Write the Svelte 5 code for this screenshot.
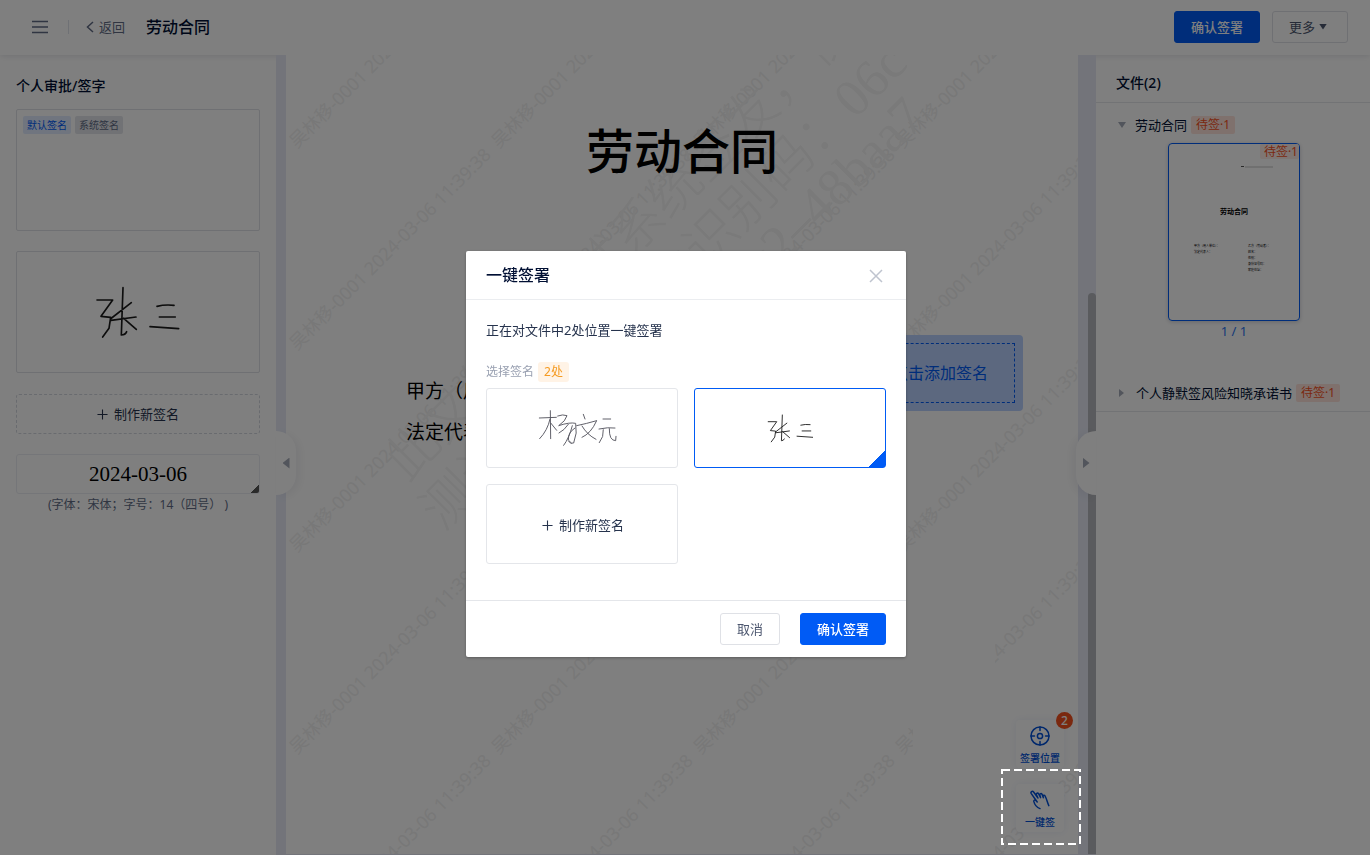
<script lang="ts">
  const WATERMARK = "吴林移-0001 2024-03-06 11:39:38";
  const TILE = 202;
  const tiles = [0, 1, 2, 3, 4].flatMap((row) =>
    [0, 1, 2, 3].map((col) => ({ x: col * TILE + 11, y: row * TILE + 94 }))
  );

  const left = ["甲方（用人单位）：", "法定代表人："];
  const right = ["乙方（劳动者）：", "姓名：", "性别：", "身份证号码：", "家庭住址："];

  let selected = $state(1);
  let open = $state(true);
</script>

{#snippet zhangSan()}
  <path d="M291 177H338L303 226L332 229L327 262L308 288M369 140L364 282Q376 282 380 272M394 185L331 234M333 238L408 228M371 232L409 265M471 196Q495 190 522 193M478 228H526M450 257L536 263" />
{/snippet}

{#snippet plus()}
  <svg class="plus" viewBox="0 0 12 12"><path d="M6 0.5V11.5M0.5 6H11.5" /></svg>
{/snippet}

<div class="app">
  <header>
    <button class="bare" aria-label="菜单">
      <svg width="16" height="14" viewBox="0 0 16 14" stroke="#606b85" stroke-width="1.3"><path d="M0 1.5H16M0 7H16M0 12.5H16" /></svg>
    </button>
    <span class="split"></span>
    <a class="back" href="#back">
      <svg width="8" height="12" viewBox="0 0 8 12" fill="none" stroke="#606b85" stroke-width="1.5"><path d="M7 1L1.5 6L7 11" /></svg>
      返回
    </a>
    <h1>劳动合同</h1>
    <button class="btn primary">确认签署</button>
    <button class="btn more">更多 <span class="tri down"></span></button>
  </header>

  <main>
    <aside class="signs">
      <h2>个人审批/签字</h2>
      <div class="sign-box">
        <span class="tag blue">默认签名</span>
        <span class="tag gray">系统签名</span>
      </div>
      <div class="sign-box centered">
        <svg class="ink" width="90" height="57" viewBox="279 129 270 171" stroke-width="5">{@render zhangSan()}</svg>
      </div>
      <button class="make">{@render plus()}制作新签名</button>
      <div class="date">2024-03-06</div>
      <p class="hint">(字体：宋体；字号：14（四号） )</p>
    </aside>

    <section class="viewer">
      <div class="page">
        <svg class="marks" aria-hidden="true">
          <g class="small">
            {#each tiles as t}
              <text transform="translate({t.x} {t.y}) rotate(-45)">{WATERMARK}</text>
            {/each}
          </g>
          <rect x="627" y="560" width="82" height="300" fill="#fff" />
          <g class="large">
            <text transform="translate(121 428) rotate(-45)">此文件由测试系统签发，仅</text>
            <text transform="translate(157 477) rotate(-45)">测试使用，文件识别码：06c</text>
            <text transform="translate(423 283) rotate(-45)">983c2–48baa7</text>
          </g>
        </svg>
        <h3>劳动合同</h3>
        <div class="parties">
          <div>{#each left as line}<p>{line}</p>{/each}</div>
          <div>{#each right as line}<p>{line}</p>{/each}</div>
        </div>
        <button class="sign-here"><span>点击添加签名</span></button>
      </div>
      <div class="thumb-bar"></div>

      <button class="handle to-left" aria-label="收起签名"><span class="tri left"></span></button>
      <button class="handle to-right" aria-label="收起文件"><span class="tri right"></span></button>

      <div class="tools">
        <button class="tool">
          <svg width="20" height="20" viewBox="0 0 20 20"><circle cx="10" cy="10" r="9" /><circle cx="10" cy="10" r="2.6" /><path d="M10 1V4.500M10 15.500V19M1 10H4.500M15.500 10H19" /></svg>
          签署位置
          <span class="badge">2</span>
        </button>
        <button class="tool">
          <svg width="22" height="20" viewBox="0 0 22 20"><path d="M11 18.6C7.5 17.4 5.6 14.6 4.8 11.4C4.6 10.2 6 9.6 7 10.6L8.2 12L2.3 3.6C1.2 1.8 3.4 .4 4.6 2L9 8L7.4 4.9C6.8 3.2 8.8 2.4 9.7 4L11.6 7.6L10.8 5C10.6 3.5 12.4 3 13.2 4.6L14.4 7.6L14 6C14.2 4.8 15.6 5 16.1 6C18 9.8 18.2 12.2 19.8 15.6" /></svg>
          一键签
        </button>
      </div>
      <svg class="focus"><rect x="1" y="1" width="78" height="74" /></svg>
    </section>

    <aside class="files">
      <h2>文件(2)</h2>
      <div class="file">
        <div class="file-name"><span class="tri down"></span>劳动合同<span class="tag red">待签·1</span></div>
        <button class="preview">
          <span class="corner">待签·1</span>
          <svg viewBox="0 0 130 176">
            <path d="M72 22.500H75" stroke="#555" />
            <path d="M76 23H104" stroke="#999" stroke-width=".6" />
            <text x="65" y="70" font-size="7" font-weight="700" text-anchor="middle">劳动合同</text>
            <g font-size="3">
              {#each left as line, i}<text x="25" y={103 + i * 6}>{line}</text>{/each}
              {#each right as line, i}<text x="79" y={103 + i * 6}>{line}</text>{/each}
            </g>
          </svg>
        </button>
        <div class="page-no">1 / 1</div>
      </div>
      <div class="file">
        <div class="file-name"><span class="tri right small-tri"></span>个人静默签风险知晓承诺书<span class="tag red">待签·1</span></div>
      </div>
    </aside>
  </main>
</div>

{#if open}
  <div class="overlay">
    <div class="dialog" role="dialog" aria-labelledby="dialog-title">
      <div class="dialog-head">
        <h2 id="dialog-title">一键签署</h2>
        <button class="bare close" aria-label="关闭" onclick={() => (open = false)}>
          <svg width="14" height="14" viewBox="0 0 14 14" stroke="#bfc4cf" stroke-width="1.5"><path d="M1 1L13 13M13 1L1 13" /></svg>
        </button>
      </div>
      <div class="dialog-body">
        <p>正在对文件中2处位置一键签署</p>
        <div class="pick">选择签名<span class="count">2处</span></div>
        <div class="cards">
          <button class="card" class:selected={selected === 0} aria-label="杨文元" onclick={() => (selected = 0)}>
            <svg class="ink pale" width="80" height="38" viewBox="227 478 240 114" stroke-width="2.800">
              <path d="M219 505L270 503M252 483L253 567M251 508Q244 542 220 567M254 521L271 542" />
              <path d="M274 499Q290 493 302 498Q298 514 277 528Q310 517 328 521Q334 550 322 580Q312 585 306 574M306 524Q294 542 278 550M318 528Q308 566 292 587M326 535Q305 548 306 571L315 580" />
              <path d="M351 494L356 508M331 528Q360 522 391 513M390 515Q374 551 347 563M347 529Q362 555 389 569" />
              <path d="M410 508H433M398 538Q425 532 446 535M411 540Q413 562 399 579M429 537Q428 573 448 573L449 560" />
            </svg>
          </button>
          <button class="card" class:selected={selected === 1} aria-label="张三" onclick={() => (selected = 1)}>
            <svg class="ink" width="49" height="31" viewBox="279 129 270 171" stroke-width="5">{@render zhangSan()}</svg>
          </button>
          <button class="card make-card">{@render plus()}制作新签名</button>
        </div>
      </div>
      <div class="dialog-foot">
        <button class="btn" onclick={() => (open = false)}>取消</button>
        <button class="btn primary">确认签署</button>
      </div>
    </div>
  </div>
{/if}

<style>
  :global(body) {
    overflow: hidden;
  }
  .app,
  .overlay {
    font-family: "Noto Sans", "Noto Sans CJK SC", sans-serif;
    font-size: 13px;
    line-height: 20px;
    color: #26334d;
  }
  .app {
    display: flex;
    flex-direction: column;
    height: 100vh;
    background: #fff;
  }
  button {
    font: inherit;
    color: inherit;
    background: none;
    border: none;
    padding: 0;
    cursor: pointer;
  }
  h1,
  h2,
  h3,
  p {
    margin: 0;
  }
  h1 {
    flex: 1;
    font-size: 16px;
    font-weight: 500;
    color: #000f33;
  }
  h2 {
    font-size: 14px;
    font-weight: 500;
    color: #000f33;
  }
  svg {
    display: block;
    flex: none;
  }

  header {
    display: flex;
    align-items: center;
    height: 55px;
    padding: 0 22px 2px 32px;
    box-sizing: border-box;
    box-shadow: 0 1px 6px rgba(0, 15, 51, 0.12);
    position: relative;
  }
  .split {
    width: 1px;
    height: 14px;
    margin: 0 17px 0 20px;
    background: #dfe2ea;
  }
  .back {
    display: flex;
    align-items: center;
    gap: 5px;
    margin-right: 21px;
    color: #606b85;
    text-decoration: none;
  }
  .btn {
    display: flex;
    align-items: center;
    gap: 4px;
    height: 32px;
    padding: 0 16px;
    box-sizing: border-box;
    border: 1px solid #dfe1e6;
    border-radius: 3px;
    color: #4d576f;
  }
  .btn.more {
    padding-right: 20px;
  }
  .btn.primary {
    border-color: #005bf5;
    background: #005bf5;
    color: #fff;
    font-weight: 500;
  }
  header .primary {
    margin-right: 12px;
  }
  .tri {
    display: block;
    flex: none;
    width: 8px;
    height: 6px;
    background: #4d576f;
    clip-path: polygon(0 0, 100% 0, 50% 100%);
  }
  .tri.left,
  .tri.right {
    width: 7px;
    height: 11px;
    background: #a5abb8;
  }
  .tri.left {
    clip-path: polygon(100% 0, 100% 100%, 0 50%);
  }
  .tri.right {
    clip-path: polygon(0 0, 100% 50%, 0 100%);
  }

  main {
    display: flex;
    flex: 1;
    min-height: 0;
  }
  .signs {
    display: flex;
    flex-direction: column;
    width: 276px;
    padding: 21px 16px;
    box-sizing: border-box;
  }
  .sign-box {
    display: flex;
    align-items: flex-start;
    gap: 4px;
    height: 122px;
    margin-bottom: 20px;
    padding: 6px;
    box-sizing: border-box;
    border: 1px solid #dfe1e6;
    border-radius: 2px;
  }
  h2 + .sign-box {
    margin-top: 13px;
  }
  .centered {
    align-items: center;
    justify-content: center;
  }
  .tag {
    padding: 0 4px;
    border-radius: 2px;
    font-size: 10px;
    line-height: 18px;
  }
  .blue {
    background: #e0ebff;
    color: #005bf5;
  }
  .gray {
    background: #e3e5ea;
    color: #606b85;
  }
  .red {
    margin-left: 4px;
    padding: 0 5px;
    background: #ffe3db;
    color: #f5511e;
    font-size: 12px;
  }
  .ink {
    fill: none;
    stroke: #1a1a1a;
    stroke-linecap: round;
    stroke-linejoin: round;
  }
  .ink.pale {
    overflow: visible;
    stroke: #55555f;
  }
  .plus {
    width: 11px;
    height: 11px;
    margin-right: 6px;
    stroke: #26334d;
    stroke-width: 1.2;
  }
  .make,
  .date {
    display: flex;
    align-items: center;
    justify-content: center;
    height: 40px;
    box-sizing: border-box;
    border-radius: 3px;
  }
  .make {
    margin: 1px 0 20px;
    border: 1px dashed #d3d7de;
  }
  .date {
    border: 1px solid #ebedf2;
    background: linear-gradient(135deg, transparent 50%, #555 50%) right 0 bottom 0 / 8px 8px no-repeat;
    color: #000;
    font-family: "Liberation Serif", serif;
    font-size: 21px;
  }
  .hint {
    margin-top: 1px;
    font-size: 12px;
    text-align: center;
    color: #606b85;
  }

  .viewer {
    position: relative;
    display: flex;
    flex: 1;
    min-width: 0;
    padding: 0 0 1px 10px;
    background: #e6e9f5;
  }
  .page {
    position: relative;
    flex: 1;
    overflow: hidden;
    background: #fff;
    color: #000;
  }
  .marks {
    position: absolute;
    inset: 0;
    width: 100%;
    height: 100%;
  }
  .small {
    fill: #f0f0f0;
    font-size: 18px;
  }
  .large {
    fill: #f4f4f4;
    font-family: "Liberation Serif", "Noto Sans CJK SC", serif;
    font-size: 53px;
    font-weight: 300;
  }
  h3 {
    position: relative;
    margin-top: 63px;
    font-family: "Liberation Serif", "Noto Sans CJK SC", serif;
    font-size: 48px;
    line-height: 70px;
    font-weight: 500;
    text-align: center;
  }
  .parties {
    position: relative;
    display: flex;
    margin: 183px 0 0 120px;
    font-family: "Liberation Serif", "Noto Sans CJK SC", serif;
    font-size: 19px;
    line-height: 41px;
  }
  .parties div {
    width: 360px;
    white-space: nowrap;
  }
  .sign-here {
    position: absolute;
    top: 280px;
    right: 55px;
    width: 166px;
    height: 76px;
    padding: 8px;
    border-radius: 4px;
    background: #b8d1ff;
    color: #005bf5;
    font-size: 16px;
  }
  .sign-here span {
    display: flex;
    align-items: center;
    justify-content: center;
    height: 100%;
    box-sizing: border-box;
    border: 1px dashed #005bf5;
  }
  .thumb-bar {
    width: 8px;
    margin: 238px 0 0 10px;
    border-radius: 4px 4px 0 0;
    background: #b4b6bc;
  }
  .handle {
    position: absolute;
    top: 376px;
    display: flex;
    align-items: center;
    justify-content: center;
    width: 20px;
    height: 64px;
    background: #fff;
  }
  .to-left {
    left: 0;
    border-radius: 0 20px 20px 0;
    box-shadow: 4px 2px 10px rgba(0, 15, 51, 0.06);
  }
  .to-right {
    right: 0;
    border-radius: 20px 0 0 20px;
    box-shadow: -4px 2px 10px rgba(0, 15, 51, 0.06);
  }
  .tools {
    position: absolute;
    right: 32px;
    bottom: 23px;
    display: flex;
    flex-direction: column;
    gap: 16px;
  }
  .tool {
    position: relative;
    display: flex;
    flex-direction: column;
    align-items: center;
    gap: 5px;
    width: 48px;
    height: 48px;
    padding-top: 6px;
    box-sizing: border-box;
    border-radius: 4px;
    background: #fff;
    box-shadow: 0 0 8px rgba(0, 60, 180, 0.08);
    color: #0050d8;
    font-size: 10px;
    font-weight: 500;
    line-height: 14px;
    white-space: nowrap;
  }
  .tool svg {
    fill: none;
    stroke: #0050d8;
    stroke-width: 1.5;
    stroke-linecap: round;
    stroke-linejoin: round;
  }
  .badge {
    position: absolute;
    top: -8px;
    right: -9px;
    width: 17px;
    height: 17px;
    border-radius: 50%;
    background: #f5511e;
    color: #fff;
    font-size: 12px;
    line-height: 17px;
  }
  .focus {
    position: absolute;
    right: 15px;
    bottom: 10px;
    z-index: 20;
    width: 80px;
    height: 76px;
    pointer-events: none;
  }
  .focus rect {
    fill: none;
    stroke: #fff;
    stroke-width: 2;
    stroke-dasharray: 8 4;
  }

  .files {
    width: 274px;
  }
  .files h2 {
    padding: 18px 20px 9px;
    border-bottom: 1px solid #e4e6eb;
  }
  .file {
    display: flex;
    flex-direction: column;
    align-items: center;
  }
  .file-name {
    display: flex;
    align-items: center;
    align-self: stretch;
    padding-left: 22px;
    color: #000f33;
  }
  .file-name .tri {
    margin-right: 9px;
    background: #a5abb8;
  }
  .file-name .small-tri {
    width: 5px;
    height: 8px;
    margin: 0 12px 0 1px;
  }
  .file:nth-of-type(1) {
    padding: 12px 0 0 2px;
  }
  .file:nth-of-type(1) .file-name {
    padding-left: 20px;
  }
  .file:nth-of-type(2) {
    padding: 42px 0 8px;
    border-bottom: 1px solid #e4e6eb;
  }
  .preview {
    position: relative;
    width: 132px;
    margin-top: 8px;
    border: 1px solid #005bf5;
    border-radius: 4px;
    box-shadow: 0 1px 4px rgba(0, 15, 51, 0.2);
  }
  .corner {
    position: absolute;
    top: 0;
    right: 0;
    padding: 0 1px 0 4px;
    border-radius: 2px;
    background: #ffece6;
    color: #f5511e;
    font-size: 12px;
    line-height: 15px;
  }
  .page-no {
    color: #2b74f0;
  }

  .overlay {
    position: fixed;
    inset: 0;
    z-index: 10;
    padding: 251px 0 0 2px;
    background: rgba(0, 0, 0, 0.5);
  }
  .dialog {
    width: 440px;
    margin: 0 auto;
    border-radius: 2px;
    background: #fff;
    box-shadow: 0 1px 3px rgba(0, 0, 0, 0.3);
  }
  .dialog-head {
    display: flex;
    align-items: center;
    justify-content: space-between;
    height: 48px;
    padding: 0 23px 0 20px;
    border-bottom: 1px solid #ebedf0;
  }
  .dialog-head h2 {
    font-size: 16px;
  }
  .close {
    padding-top: 2px;
  }
  .dialog-body {
    padding: 20px 20px 36px;
  }
  .pick {
    display: flex;
    gap: 4px;
    margin: 22px 0 6px;
    font-size: 12px;
    color: #99a0b1;
  }
  .count {
    padding: 0 6px;
    border-radius: 3px;
    background: #fff3e6;
    color: #f59b22;
  }
  .cards {
    display: grid;
    grid-template-columns: 1fr 1fr;
    gap: 16px;
  }
  .card {
    display: flex;
    align-items: center;
    justify-content: center;
    height: 80px;
    border: 1px solid #e4e6ea;
    border-radius: 3px;
  }
  .make-card {
    padding: 2px 0 0 2px;
  }
  .card.selected {
    border-color: #005bf5;
    background: linear-gradient(135deg, transparent 50%, #005bf5 50%) right bottom / 16px 16px no-repeat;
  }
  .dialog-foot {
    display: flex;
    justify-content: flex-end;
    gap: 20px;
    padding: 12px 20px;
    border-top: 1px solid #e4e6ea;
  }
</style>
